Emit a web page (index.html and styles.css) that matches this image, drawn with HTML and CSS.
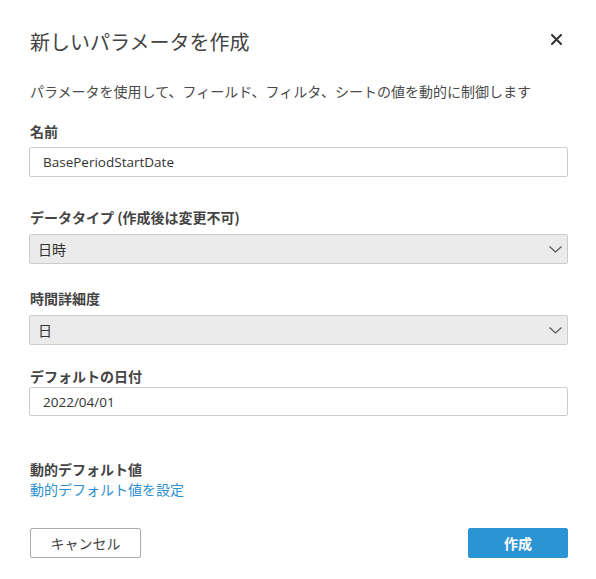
FILE: index.html
```html
<!DOCTYPE html>
<html lang="ja">
<head>
<meta charset="utf-8">
<link rel="stylesheet" href="styles.css">
</head>
<body>
<div class="dialog">
  <div class="header">
    <h1 class="title">新しいパラメータを作成</h1>
    <button class="close" aria-label="閉じる">
      <svg width="11" height="11" viewBox="0 0 11 11"><path d="M1 1 L10 10 M10 1 L1 10" stroke="#333" stroke-width="2" stroke-linecap="round"/></svg>
    </button>
  </div>
  <p class="desc">パラメータを使用して、フィールド、フィルタ、シートの値を動的に制御します</p>

  <div class="label l-name">名前</div>
  <div class="input">BasePeriodStartDate</div>

  <div class="label l-type">データタイプ (作成後は変更不可)</div>
  <div class="select">
    <span>日時</span>
    <svg class="chev" width="13" height="7" viewBox="0 0 13 7"><path d="M0.5 0.5 L6.5 6 L12.5 0.5" fill="none" stroke="#555" stroke-width="1.2"/></svg>
  </div>

  <div class="label l-gran">時間詳細度</div>
  <div class="select">
    <span>日</span>
    <svg class="chev" width="13" height="7" viewBox="0 0 13 7"><path d="M0.5 0.5 L6.5 6 L12.5 0.5" fill="none" stroke="#555" stroke-width="1.2"/></svg>
  </div>

  <div class="label l-date">デフォルトの日付</div>
  <div class="input date">2022/04/01</div>

  <div class="label l-dyn">動的デフォルト値</div>
  <a class="link" href="#">動的デフォルト値を設定</a>

  <div class="actions">
    <button class="btn cancel">キャンセル</button>
    <button class="btn primary">作成</button>
  </div>
</div>
</body>
</html>
```

FILE: styles.css
```css
html, body {
  margin: 0;
  padding: 0;
  background: #fff;
}
body {
  font-family: "Open Sans", "Noto Sans CJK JP", sans-serif;
  color: #444;
}
.dialog {
  padding: 30px 28px 0 29px;
}
.header {
  display: flex;
  justify-content: space-between;
  align-items: center;
  height: 24px;
}
.title {
  margin: 0 0 0 1px;
  font-size: 20px;
  font-weight: 400;
  line-height: 24px;
  color: #444;
  font-family: "Noto Sans CJK JP", sans-serif;
}
.close {
  border: 0;
  background: none;
  padding: 0;
  margin-right: 6px;
  margin-top: -6px;
  display: flex;
}
.desc {
  margin: 27px 0 0 1px;
  font-size: 14px;
  line-height: 20px;
  color: #4a4a4a;
  font-family: "Noto Sans CJK JP", sans-serif;
}
.label {
  font-size: 14px;
  font-weight: 700;
  line-height: 20px;
  color: #444;
  margin-left: 1px;
  font-family: "Noto Sans CJK JP", sans-serif;
}
.l-name { margin-top: 20px; margin-bottom: 6px; }
.l-type { margin-top: 30px; margin-bottom: 7px; }
.l-gran { margin-top: 24px; margin-bottom: 7px; }
.l-date { margin-top: 21px; margin-bottom: 1px; }
.l-dyn { margin-top: 43px; }
.input {
  box-sizing: border-box;
  height: 30px;
  border: 1px solid #ccc;
  border-radius: 2px;
  padding: 0 13px;
  display: flex;
  align-items: center;
  font-size: 13.5px;
  color: #333;
}
.input.date { height: 29px; }
.select {
  box-sizing: border-box;
  height: 30px;
  border: 1px solid #ccc;
  border-radius: 2px;
  background: #ebebeb;
  padding: 0 5px 0 8px;
  display: flex;
  align-items: center;
  justify-content: space-between;
  font-size: 14px;
  color: #333;
  font-family: "Noto Sans CJK JP", sans-serif;
}
.chev { margin-top: 1px; }
.link {
  display: block;
  font-size: 14px;
  line-height: 20px;
  color: #2b8fd0;
  text-decoration: none;
  margin-left: 1px;
  font-family: "Noto Sans CJK JP", sans-serif;
}
.actions {
  margin-top: 29px;
  display: flex;
  justify-content: space-between;
}
.btn {
  box-sizing: border-box;
  height: 30px;
  border-radius: 2px;
  font-size: 14px;
  font-family: "Noto Sans CJK JP", sans-serif;
  cursor: pointer;
}
.cancel {
  width: 111px;
  margin-left: 1px;
  background: #fff;
  border: 1px solid #aaa;
  color: #444;
}
.primary {
  width: 100px;
  background: #2b94d3;
  border: 1px solid #2b94d3;
  color: #fff;
  font-weight: 700;
}
```
